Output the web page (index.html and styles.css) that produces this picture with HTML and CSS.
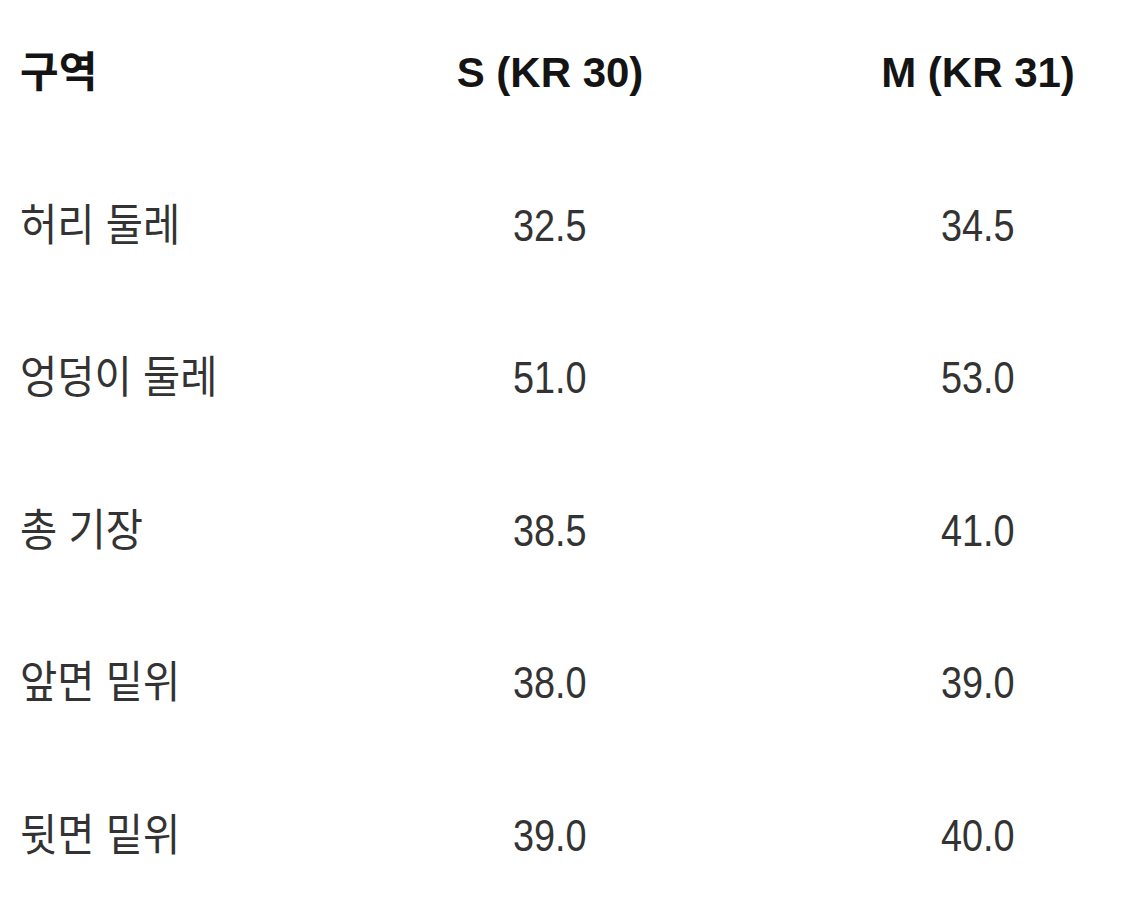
FILE: index.html
```html
<!DOCTYPE html>
<html lang="ko">
<head>
<meta charset="utf-8">
<title>사이즈 표</title>
<link rel="stylesheet" href="styles.css">
</head>
<body>
<div class="size-table">
  <div class="row head">
    <div class="cell label"><span class="txt">구역</span></div>
    <div class="cell val"><span class="txt">S (KR 30)</span></div>
    <div class="cell val"><span class="txt">M (KR 31)</span></div>
  </div>
  <div class="row">
    <div class="cell label"><span class="txt">허리 둘레</span></div>
    <div class="cell val"><span class="txt">32.5</span></div>
    <div class="cell val"><span class="txt">34.5</span></div>
  </div>
  <div class="row">
    <div class="cell label"><span class="txt">엉덩이 둘레</span></div>
    <div class="cell val"><span class="txt">51.0</span></div>
    <div class="cell val"><span class="txt">53.0</span></div>
  </div>
  <div class="row">
    <div class="cell label"><span class="txt">총 기장</span></div>
    <div class="cell val"><span class="txt">38.5</span></div>
    <div class="cell val"><span class="txt">41.0</span></div>
  </div>
  <div class="row">
    <div class="cell label"><span class="txt">앞면 밑위</span></div>
    <div class="cell val"><span class="txt">38.0</span></div>
    <div class="cell val"><span class="txt">39.0</span></div>
  </div>
  <div class="row">
    <div class="cell label"><span class="txt">뒷면 밑위</span></div>
    <div class="cell val"><span class="txt">39.0</span></div>
    <div class="cell val"><span class="txt">40.0</span></div>
  </div>
</div>
</body>
</html>
```
FILE: styles.css
```css
html, body {
  margin: 0;
  padding: 0;
  background: #ffffff;
}

body {
  font-family: "Liberation Sans", "Noto Sans CJK KR", Arial, sans-serif;
  color: #333333;
}

.size-table {
  width: 1106px;
}

.row {
  display: grid;
  grid-template-columns: 250px 600px 256px;
  height: 152.5px;
  align-items: center;
  padding-bottom: 6px;
  box-sizing: border-box;
  font-size: 44px;
  line-height: 1;
}

.cell.label {
  padding-left: 20px;
  white-space: nowrap;
}

.cell.val {
  text-align: center;
  white-space: nowrap;
}

.txt {
  display: inline-block;
  transform: scaleX(0.86);
}

.label .txt {
  transform: scaleX(0.92);
  transform-origin: left center;
}

.val .txt {
  transform-origin: center center;
}

.row.head {
  font-size: 42px;
  font-weight: 700;
  color: #141414;
}

.row.head .txt,
.row.head .label .txt {
  transform: none;
}
```
